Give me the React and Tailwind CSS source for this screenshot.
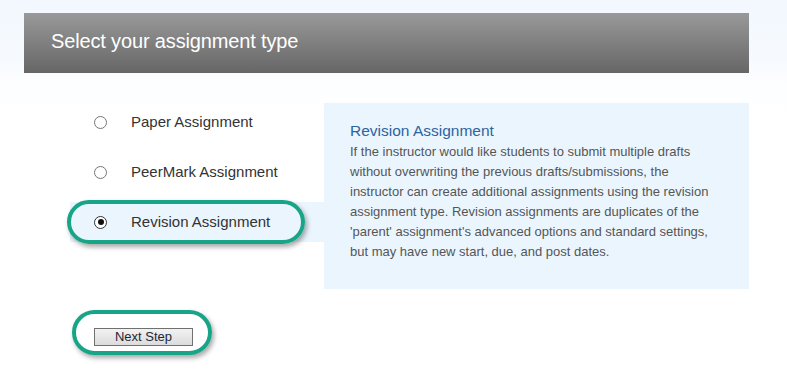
const options = [
  { id: 'paper', label: 'Paper Assignment' },
  { id: 'peermark', label: 'PeerMark Assignment' },
  { id: 'revision', label: 'Revision Assignment' },
]

const Radio = ({ checked }) => (
  <span
    className={`flex items-center justify-center w-[13px] h-[13px] rounded-full bg-white border ${
      checked ? 'border-[#333]' : 'border-[#767676]'
    }`}
  >
    {checked && <span className="w-[6px] h-[6px] rounded-full bg-[#111]" />}
  </span>
)

const Highlight = ({ className }) => (
  <div
    className={`absolute rounded-full border-[4px] border-[#17a487] shadow-[2px_3px_5px_rgba(0,0,0,0.35)] pointer-events-none ${className}`}
  />
)

export default function App() {
  const selected = 'revision'

  return (
    <div className="min-h-[376px] bg-[linear-gradient(to_bottom,#f2f8fe_0px,#f6faff_60px,#fdfeff_85px,#ffffff_120px)] pt-[13px] font-['Liberation_Sans',Arial,sans-serif]">
      <div className="ml-[24px] w-[725px]">
        <div className="h-[60px] bg-[linear-gradient(to_bottom,#999999,#666666)] pl-[27px] pt-[16px]">
          <h1 className="text-[20px] leading-[24px] tracking-[-0.15px] text-white">
            Select your assignment type
          </h1>
        </div>

        <div className="flex mt-[29px]">
          <div className="w-[300px] flex flex-col gap-[10px]">
            {options.map(opt => (
              <div
                key={opt.id}
                className={`relative ml-[46px] h-[40px] flex items-center pl-[24px] ${
                  opt.id === selected ? 'bg-[#ebf5fe]' : ''
                }`}
              >
                <Radio checked={opt.id === selected} />
                <span className="ml-[24px] text-[15px] text-[#333]">{opt.label}</span>
                {opt.id === selected && (
                  <Highlight className="left-[-3px] top-[-2px] w-[238px] h-[44px]" />
                )}
              </div>
            ))}
          </div>

          <div className="mt-[1px] w-[425px] h-[186px] bg-[#ebf5fe] pl-[26px] pt-[17px]">
            <h2 className="text-[15.5px] leading-[22px] text-[#2c64a0]">Revision Assignment</h2>
            <p className="text-[13px] leading-[20px] text-[#555] whitespace-nowrap">
              If the instructor would like students to submit multiple drafts
              <br />
              without overwriting the previous drafts/submissions, the
              <br />
              instructor can create additional assignments using the revision
              <br />
              assignment type. Revision assignments are duplicates of the
              <br />
              'parent' assignment's advanced options and standard settings,
              <br />
              but may have new start, due, and post dates.
            </p>
          </div>
        </div>

        <div className="relative mt-[35px] ml-[70px] w-[99px]">
          <button className="w-[99px] h-[18px] border border-[#707070] bg-[linear-gradient(to_bottom,#f2f2f2,#dcdcdc)] text-[13px] leading-[16px] text-[#1b2838]">
            Next Step
          </button>
          <Highlight className="left-[-22px] top-[-14px] w-[140px] h-[45px]" />
        </div>
      </div>
    </div>
  )
}
